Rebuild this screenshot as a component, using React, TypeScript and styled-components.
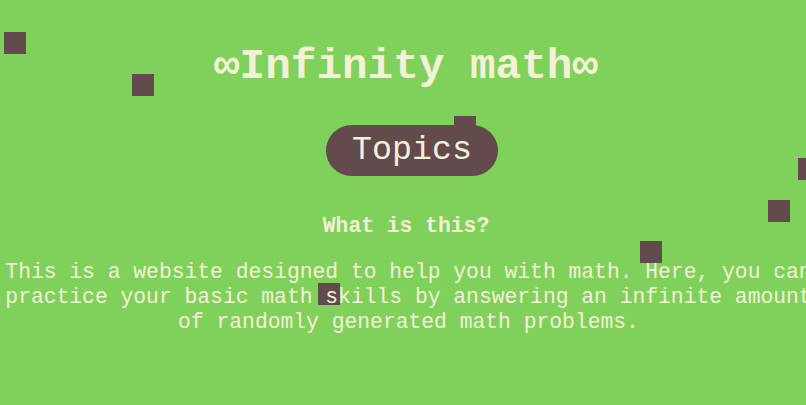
import * as React from 'react';
import styled, {createGlobalStyle} from 'styled-components';

const GlobalStyle = createGlobalStyle`
  html, body {
    margin: 0;
    padding: 0;
    background: #80d15b;
    overflow: hidden;
  }
  body {
    font-family: "Liberation Mono", "Courier New", monospace;
    font-size: 16pt;
    color: #f3f1d6;
  }
`;

const Page = styled.div`
  position: relative;
  width: 812px;
  min-height: 405px;
  display: flex;
  flex-direction: column;
  align-items: center;
`;

const Squares = styled.div`
  position: absolute;
  inset: 0;
  z-index: 0;
  pointer-events: none;
`;

const Square = styled.div`
  position: absolute;
  width: 22px;
  height: 22px;
  background: #634a4e;
`;

const Content = styled.main`
  position: relative;
  z-index: 1;
  display: flex;
  flex-direction: column;
  align-items: center;
  width: 100%;
`;

const Title = styled.h1`
  margin: 43px 0 0;
  font-size: 2em;
  font-weight: bold;
  line-height: 48px;
`;

const TopicsButton = styled.button`
  margin: 34px 0 0 12px;
  padding: 6px 26px;
  border: none;
  border-radius: 26px;
  background: #634b4d;
  color: #f3efd9;
  font-family: inherit;
  font-size: 25pt;
  line-height: 39px;
  cursor: pointer;
`;

const Heading = styled.h2`
  margin: 38px 0 0;
  font-size: 1em;
  font-weight: bold;
  line-height: 24px;
`;

const Text = styled.p`
  box-sizing: border-box;
  margin: 22px 0 0;
  padding-left: 5px;
  width: 100%;
  text-align: center;
  line-height: 25px;
`;

const squares = [
  {x: 4, y: 32},
  {x: 132, y: 74},
  {x: 454, y: 116},
  {x: 798, y: 158},
  {x: 768, y: 200},
  {x: 640, y: 241},
  {x: 318, y: 283},
];

const App = () => (
  <>
    <GlobalStyle />
    <Page>
      <Squares>
        {squares.map((s, i) => (
          <Square key={i} style={{left: s.x, top: s.y}} />
        ))}
      </Squares>
      <Content>
        <Title>∞Infinity math∞</Title>
        <TopicsButton>Topics</TopicsButton>
        <Heading>What is this?</Heading>
        <Text>
          This is a website designed to help you with math. Here, you can
          practice your basic math skills by answering an infinite amount of
          randomly generated math problems.
        </Text>
      </Content>
    </Page>
  </>
);

export default App;
